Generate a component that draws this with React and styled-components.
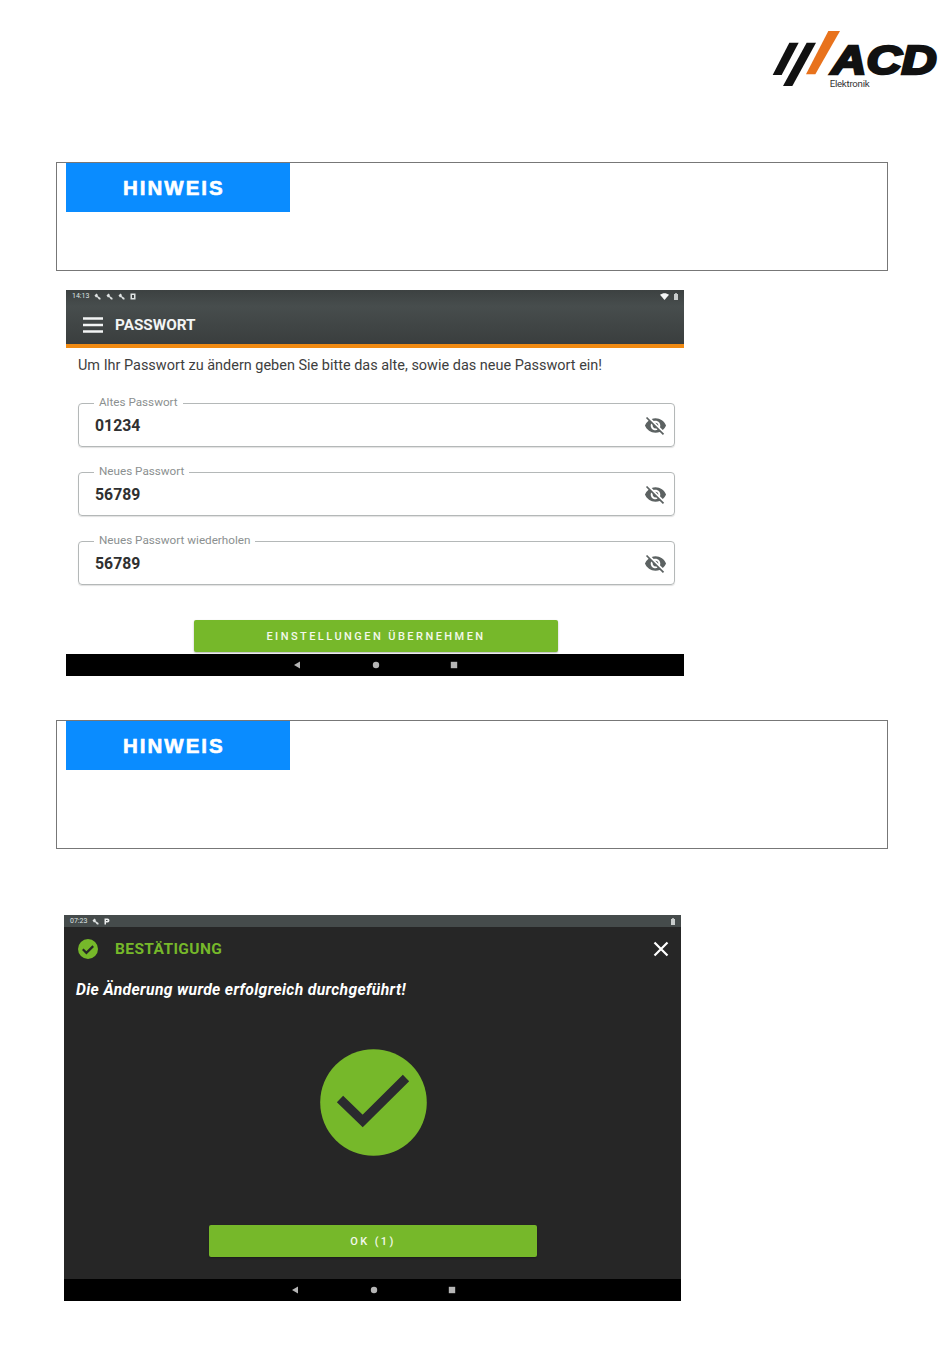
import React from "react";
import styled, { createGlobalStyle } from "styled-components";
import { MdVisibilityOff } from "react-icons/md";

const GlobalStyle = createGlobalStyle`
  html, body {
    margin: 0;
    padding: 0;
    background: #fff;
  }
  * {
    box-sizing: border-box;
  }
`;

const Page = styled.div`
  width: 950px;
  height: 1369px;
  display: flex;
  flex-direction: column;
  font-family: Roboto, "Liberation Sans", sans-serif;
  overflow: hidden;
`;

const LogoRow = styled.div`
  height: 100px;
  padding-top: 20px;
  display: flex;
  justify-content: flex-end;
`;

const Notice = styled.div`
  width: 832px;
  height: ${(p) => p.$height}px;
  margin: ${(p) => p.$top}px 0 0 56px;
  padding-left: 9px;
  border: 1px solid #777;
`;

const NoticeTag = styled.div`
  width: 224px;
  height: 49px;
  padding-left: 57px;
  display: flex;
  align-items: center;
  background: #0a8cff;
  color: #fff;
  font-family: "Liberation Sans", Arial, sans-serif;
  font-size: 20.5px;
  font-weight: 700;
  letter-spacing: 2px;
  -webkit-text-stroke: 0.6px #fff;
`;

const Screen = styled.div`
  width: ${(p) => p.$width}px;
  height: 386px;
  margin: ${(p) => p.$top}px 0 0 ${(p) => p.$left}px;
  display: flex;
  flex-direction: column;
  background: ${(p) => p.$bg};
`;

const AppBar = styled.div`
  height: 58px;
  flex-shrink: 0;
  border-bottom: 4px solid #f08a12;
  background: linear-gradient(#3c4141, #474d4d 30%, #3a3e3e);
  display: flex;
  flex-direction: column;
`;

const StatusBar = styled.div`
  height: ${(p) => p.$height}px;
  flex-shrink: 0;
  padding: 0 6px;
  display: flex;
  align-items: center;
  gap: 5px;
  background: ${(p) => p.$bg || "transparent"};
  color: #dfe3e3;
  font-size: 7px;
`;

const StatusRight = styled.div`
  margin-left: auto;
  display: flex;
  align-items: center;
  gap: 5px;
`;

const BarRow = styled.div`
  flex: 1;
  padding: 3px 0 0 17px;
  display: flex;
  align-items: center;
  gap: 12px;
`;

const BarTitle = styled.span`
  color: #f2f4f4;
  font-size: 15.3px;
  font-weight: 700;
`;

const Intro = styled.div`
  height: 34px;
  margin: 0 0 21px 12px;
  display: flex;
  align-items: center;
  color: #3e3e3e;
  font-size: 14.46px;
`;

const Fields = styled.div`
  margin: 0 9px 0 12px;
  display: flex;
  flex-direction: column;
  gap: 25px;
`;

const Field = styled.div`
  position: relative;
  height: 44px;
  padding: 0 7px 0 16px;
  display: flex;
  align-items: center;
  justify-content: space-between;
  border: 1px solid #b4b8b8;
  border-radius: 4px;
  box-shadow: 0 1px 1px rgba(0, 0, 0, 0.12);
  color: #303030;
  font-size: 15.8px;
  font-weight: 700;
`;

const FieldValue = styled.span`
  padding-top: 1px;
`;

const FieldLabel = styled.span`
  position: absolute;
  top: -9px;
  left: 16px;
  padding: 0 5px;
  margin-left: -1px;
  background: #fff;
  color: #8b9090;
  font-size: 11.7px;
  font-weight: 400;
  line-height: 14px;
`;

const EyeIcon = styled(MdVisibilityOff)`
  width: 23px;
  height: 23px;
  color: #5c6262;
`;

const ActionButton = styled.button`
  display: block;
  width: ${(p) => p.$width}px;
  height: 32px;
  margin: ${(p) => p.$top}px 0 0 ${(p) => p.$left}px;
  padding: 0;
  border: none;
  border-radius: 2px;
  background: #76b82a;
  color: #f4f8ec;
  font-family: Roboto, sans-serif;
  font-size: 11px;
  font-weight: 500;
  letter-spacing: ${(p) => p.$spacing}px;
  box-shadow: 0 1px 2px rgba(0, 0, 0, 0.3);
`;

const NavBar = styled.div`
  height: 22px;
  margin-top: auto;
  flex-shrink: 0;
  padding-left: ${(p) => p.$left}px;
  display: flex;
  align-items: center;
  gap: 70.5px;
  background: #000;
`;

const DialogHeader = styled.div`
  height: 44px;
  padding: 0 12px 0 14px;
  display: flex;
  align-items: center;
`;

const DialogTitle = styled.span`
  margin-left: 17px;
  color: #76b82a;
  font-size: 15.5px;
  font-weight: 700;
  letter-spacing: 0.4px;
`;

const CloseIcon = styled.svg`
  margin-left: auto;
`;

const Message = styled.div`
  height: 20px;
  margin: 8px 0 0 12px;
  display: flex;
  align-items: center;
  color: #fff;
  font-size: 15.7px;
  font-style: italic;
  font-weight: 700;
  letter-spacing: 0.35px;
`;

const BigCheckWrap = styled.div`
  margin: 50px 0 0 256px;
  line-height: 0;
`;

const Logo = () => (
  <svg width="190" height="80" viewBox="0 0 570 240">
    <polygon points="88,68 116,68 65,165 38,165" fill="#111" />
    <polygon points="140,68 168,68 97,198 69,198" fill="#111" />
    <polygon points="205,33 240,33 166,163 138,163" fill="#e8721c" />
    <text
      x="214"
      y="161"
      textLength="316"
      lengthAdjust="spacingAndGlyphs"
      fontFamily="Liberation Sans, Arial, sans-serif"
      fontSize="124"
      fontWeight="700"
      fontStyle="italic"
      fill="#111"
      stroke="#111"
      strokeWidth="8"
    >
      ACD
    </text>
    <text x="209" y="200" fontFamily="Roboto, sans-serif" fontSize="29" fill="#333" textLength="120">
      Elektronik
    </text>
  </svg>
);

const MenuIcon = () => (
  <svg width="20" height="16" viewBox="0 0 20 16">
    <path d="M0 1.500h20M0 8h20M0 14.500h20" stroke="#f2f4f4" strokeWidth="2.600" />
  </svg>
);

const KeyGlyph = () => (
  <svg width="7" height="7" viewBox="0 0 7 7">
    <path d="M0.500 2.500l2-2 1.500 1.500-0.500 1 3 2v1.500h-1.500l-2-2.500-1 0.500z" fill="#dfe3e3" />
  </svg>
);

const BoxGlyph = () => (
  <svg width="6" height="7" viewBox="0 0 6 7">
    <path d="M0.500 0.500h5v6h-5zM2 2v3h2v-3z" fill="#dfe3e3" fillRule="evenodd" />
  </svg>
);

const ParkGlyph = () => (
  <svg width="6" height="7" viewBox="0 0 6 7">
    <path d="M0.500 0.500h3a2 2 0 0 1 0 4h-1.500v2h-1.500zM2 2v1h1.500v-1z" fill="#eef0f0" fillRule="evenodd" />
  </svg>
);

const WifiGlyph = () => (
  <svg width="9" height="7" viewBox="0 0 9 7">
    <path d="M0 1.800C2.500-0.300 6.500-0.300 9 1.800L4.500 7z" fill="#f4f6f6" />
  </svg>
);

const BatteryGlyph = () => (
  <svg width="4" height="7" viewBox="0 0 4 7">
    <path d="M1.200 0h1.600v1h1.200v6h-4v-6h1.200z" fill="#c8cccc" />
  </svg>
);

const BackGlyph = () => (
  <svg width="8" height="8" viewBox="0 0 8 8">
    <path d="M7 0.500v7l-6-3.500z" fill="#b5b5b5" />
  </svg>
);

const HomeGlyph = () => (
  <svg width="8" height="8" viewBox="0 0 8 8">
    <circle cx="4" cy="4" r="3.200" fill="#b5b5b5" />
  </svg>
);

const RecentGlyph = () => (
  <svg width="8" height="8" viewBox="0 0 8 8">
    <rect x="0.800" y="0.800" width="6.400" height="6.400" fill="#b5b5b5" />
  </svg>
);

const NavIcons = ({ left }) => (
  <NavBar $left={left}>
    <BackGlyph />
    <HomeGlyph />
    <RecentGlyph />
  </NavBar>
);

const SmallCheck = () => (
  <svg width="20" height="20" viewBox="0 0 20 20">
    <circle cx="10" cy="10" r="10" fill="#76b82a" />
    <path d="M4.800 10.300l3.600 3.600 6.800-6.800" fill="none" stroke="#262626" strokeWidth="2.200" />
  </svg>
);

const BigCheck = () => (
  <svg width="107" height="107" viewBox="0 0 107 107">
    <circle cx="53.500" cy="53.500" r="53.300" fill="#76b82a" />
    <path d="M20 50l22.700 22 43.300-43" fill="none" stroke="#2a2a2e" strokeWidth="9" />
  </svg>
);

const fields = [
  { label: "Altes Passwort", value: "01234" },
  { label: "Neues Passwort", value: "56789" },
  { label: "Neues Passwort wiederholen", value: "56789" },
];

const App = () => {
  return (
    <Page>
      <GlobalStyle />
      <LogoRow>
        <Logo />
      </LogoRow>

      <Notice $top={62} $height={109}>
        <NoticeTag>HINWEIS</NoticeTag>
      </Notice>

      <Screen $width={618} $top={19} $left={66} $bg="#fff">
        <AppBar>
          <StatusBar $height={12}>
            <span>14:13</span>
            <KeyGlyph />
            <KeyGlyph />
            <KeyGlyph />
            <BoxGlyph />
            <StatusRight>
              <WifiGlyph />
              <BatteryGlyph />
            </StatusRight>
          </StatusBar>
          <BarRow>
            <MenuIcon />
            <BarTitle>PASSWORT</BarTitle>
          </BarRow>
        </AppBar>
        <Intro>Um Ihr Passwort zu ändern geben Sie bitte das alte, sowie das neue Passwort ein!</Intro>
        <Fields>
          {fields.map((f) => (
            <Field key={f.label}>
              <FieldLabel>{f.label}</FieldLabel>
              <FieldValue>{f.value}</FieldValue>
              <EyeIcon />
            </Field>
          ))}
        </Fields>
        <ActionButton $width={364} $top={35} $left={128} $spacing={2.45}>
          EINSTELLUNGEN ÜBERNEHMEN
        </ActionButton>
        <NavIcons left={227} />
      </Screen>

      <Notice $top={44} $height={129}>
        <NoticeTag>HINWEIS</NoticeTag>
      </Notice>

      <Screen $width={617} $top={66} $left={64} $bg="#262626">
        <StatusBar $height={12} $bg="#454b4b">
          <span>07:23</span>
          <KeyGlyph />
          <ParkGlyph />
          <StatusRight>
            <BatteryGlyph />
          </StatusRight>
        </StatusBar>
        <DialogHeader>
          <SmallCheck />
          <DialogTitle>BESTÄTIGUNG</DialogTitle>
          <CloseIcon width="16" height="16" viewBox="0 0 16 16">
            <path d="M1.500 1.500l13 13M14.500 1.500l-13 13" stroke="#fff" strokeWidth="2.200" />
          </CloseIcon>
        </DialogHeader>
        <Message>Die Änderung wurde erfolgreich durchgeführt!</Message>
        <BigCheckWrap>
          <BigCheck />
        </BigCheckWrap>
        <ActionButton $width={328} $top={69} $left={145} $spacing={2.4}>
          OK (1)
        </ActionButton>
        <NavIcons left={227} />
      </Screen>
    </Page>
  );
};

export default App;
